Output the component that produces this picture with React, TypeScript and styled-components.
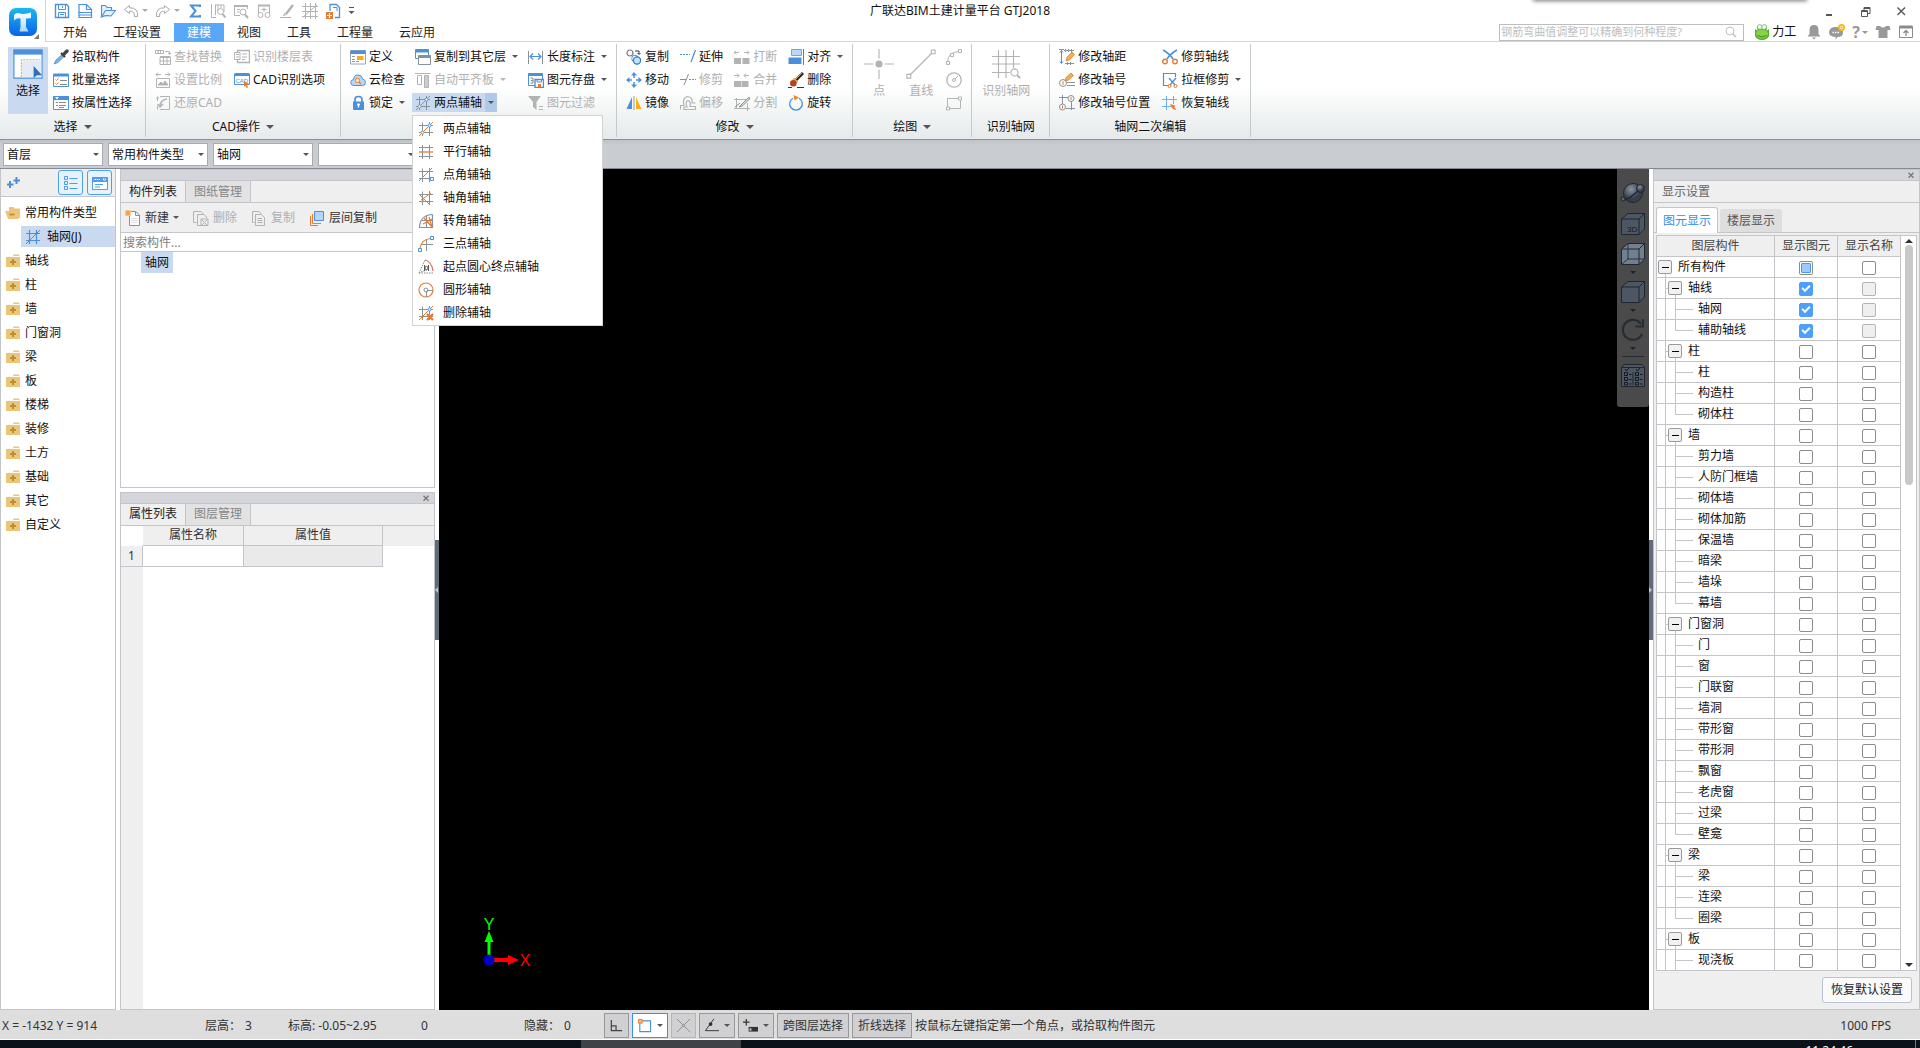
import React, { useState } from "react";
import styled, { createGlobalStyle, css } from "styled-components";

/* ---------- palette ---------- */
const c = {
  blue: "#4a90dd",
  pale: "#c9d9ef",
  line: "#c3c5cb",
  grey: "#b3b3b3",
  slate: "#87929c",
  orange: "#ec7a2c",
  text: "#111",
  panel: "#efefef",
  strip: "#d3d5da",
};

const Global = createGlobalStyle`
  *, *::before, *::after { box-sizing: border-box; }
  body { margin: 0; background: #fff; overflow: hidden; }
  body, button, input, select {
    font-family: "Noto Sans", "Noto Sans CJK SC", sans-serif;
    font-size: 12px;
    line-height: 16px;
    color: ${c.text};
  }
  button { border: 0; padding: 0; margin: 0; background: none; white-space: nowrap; }
  ul { list-style: none; margin: 0; padding: 0; }
`;

/* ---------- icons ---------- */
const g = c.grey;
const hash = (col: string) => (
  <path d="M4.500 1.500V15M11.500 1V15M1 4.500H15M1 11.500H15" stroke={col} fill="none" />
);

const icons: Record<string, React.ReactNode> = {
  save: <g stroke={c.blue} fill="none"><path d="M1.500 1.500H12.500L14.500 3.500V14.500H1.500Z" strokeWidth="1.400" /><path d="M4.500 2V6.500H11.500V2M8.500 3V5M4.500 14V9.500H11.500V14M6 11.500H10" /></g>,
  doc: <g stroke={c.blue} fill="none"><path d="M2 1.500H9.500L14.500 6.500V14.500H2Z" strokeWidth="1.200" /><path d="M9.500 1.500V6.500H14.500M1.500 9.500H14.500M1.500 12H14.500" strokeWidth="1.200" /></g>,
  open: <path d="M1.500 14V2.500H5.500L7 4.500H11.500V7M1.500 14L5.500 7.500H15.500L11 13Q6 12 1.500 14Z" stroke={c.blue} fill="#e4f0fc" strokeWidth="1.100" />,
  undo: <path d="M6.500 2.500L1.500 6.500L6.500 10.500V8.200Q11.500 7.500 11.500 13.500H14.500Q15.500 4.500 6.500 4.800Z" stroke="#a9a9a9" fill="#fff" />,
  redo: <path d="M9.500 2.500L14.500 6.500L9.500 10.500V8.200Q4.500 7.500 4.500 13.500H1.500Q.5 4.500 9.500 4.800Z" stroke="#a9a9a9" fill="#fff" />,
  sum: <path d="M13 4V2.500H4L8.500 8L4 13.500H13V12" stroke={c.blue} strokeWidth="2" fill="none" />,
  qa1: <g stroke={g} fill="none"><path d="M1.500 1V14.500H6M5 2H14V9M5.500 2V12M8 2V8M11 2V5" /><circle cx="10.500" cy="8.500" r="3" /><path d="M12.500 11L15.500 14.500" strokeWidth="2" /></g>,
  qa2: <g stroke={g} fill="none"><path d="M7 12.500H1.500V2.500H14.500V6" /><path d="M1 3H15" strokeWidth="2" /><path d="M4 6.500H7M4 9H6" /><circle cx="10" cy="9" r="3" /><path d="M12 11.500L15 15" strokeWidth="2" /></g>,
  qa3: <g stroke={g} fill="none"><path d="M2.500 10V2.500H13.500V10" /><path d="M2 2.500H14" strokeWidth="2" /><path d="M8 4.500V9M5.500 6.500H10.500" /><circle cx="4.500" cy="12" r="2.500" /><circle cx="11.500" cy="12" r="2.500" /></g>,
  qa4: <g stroke={g} fill="none"><path d="M14 2L7 11" strokeWidth="2.500" /><path d="M6 10L4.500 12.500L7.500 11.500M1 14.500H12" /></g>,
  qa5: <path d="M3.500 0V16M8.500 0V16M13.500 0V16M0 3.500H16M0 8.500H16M0 13.500H16M1 14L15 2" stroke={g} fill="none" />,
  qa6: <g fill="none"><path d="M5 8V1.500H11.500L14.500 4.500V14.500H10" stroke={c.blue} strokeWidth="1.300" /><path d="M8 4.500H12M12 4.500V8" stroke={c.blue} /><path d="M1 9H8V16H1Z" fill={c.orange} /><path d="M4.500 10V15M2 12.500H7" stroke="#fff" strokeWidth="1.200" /></g>,
  select: <g><path d="M.5 .5H15.500V15.500H.5Z" fill="#fff" stroke={c.blue} strokeWidth=".6" /><path d="M.3 .3H15.700V3H.3Z" fill={c.blue} /><path d="M4.500 15V5.700H14.500" fill="none" stroke="#fbb214" strokeWidth=".6" strokeDasharray="1.200 .5" /><path d="M4.900 6.100H15V15H4.900Z" fill="#e4ebf6" /><path d="M11 9L15.500 14H12.700L11 15.400Z" fill="#2e6fb5" /></g>,
  pick: <g><path d="M1 15L3 11L8.500 6L10.500 8L5 13.500Z" fill="#79b5ea" stroke="#4f83b5" strokeWidth=".7" /><path d="M8 4L12 8" stroke="#333" strokeWidth="2" /><path d="M10.500 5.500L14 2" stroke="#444" strokeWidth="3.400" strokeLinecap="round" /></g>,
  batch: <g fill="none"><path d="M.5 2.500H15.500V14.500H.5Z" stroke={c.blue} fill="#fff" /><path d="M.5 3H15.500" stroke={c.blue} strokeWidth="3" /><path d="M2.500 7.500L3.500 8.500L5.500 6.500M2.500 11.500L3.500 12.500L5.500 10.500" stroke={c.orange} /><path d="M7 8.500H14M7 12.500H14" stroke="#888" /></g>,
  prop: <g fill="none"><path d="M.5 1.500H15.500V14.500H.5Z" stroke={c.blue} fill="#fff" /><path d="M.5 3H15.500" stroke={c.blue} strokeWidth="4" /><path d="M2 2H6L4 4.500Z" fill="#fff" /><path d="M3 7.500H5M3 10.500H5M6 7.500H13M6 10.500H13M6 12.500H11" stroke="#8a8a8a" /></g>,
  find: <g stroke={g} fill="none"><path d="M.5 1.500H8.500V4.500H.5ZM3 1.500V4.500M5.500 1.500V4.500M10 2.500H14.500V5M13 4L14.500 5.500L16 4M5 8.500H15.500V15.500H5ZM5 7.500H15.500M8.500 8V15.500M12 8V15.500M5 12H15.500" /></g>,
  scale: <g stroke={g} fill="none"><path d="M1 2.500H6M3 .5L1 2.500L3 4.500M10 2.500H15M13 .5L15 2.500L13 4.500M1.500 6.500H14.500V15.500H1.500Z" /><path d="M3 13L6 10L8 12L10 9L13 13Z" fill={g} /></g>,
  restore: <g stroke={g} fill="none"><path d="M5 1.500H14.500V14.500H5M2.500 11V14.500M2.500 1.500V6M1 3H4" /><path d="M12 4Q5 5 5 12M2.500 9L5 12L8 9" strokeWidth="1.500" /></g>,
  floor: <g stroke={g} fill="none"><path d="M3.500 1.500H15.500V13.500H3.500Z" strokeWidth="1.400" /><path d="M8 5H13M8 8H13M8 10.500H11" /><path d="M.5 3.500H6V10.500H.5Z" fill="#fff" /><path d="M2 5.500H5M2 8H5" /></g>,
  cad: <g><path d="M.5 2.500H15.500V12.500H.5Z" fill="#fff" stroke={c.blue} /><path d="M.5 2.500H15.500" stroke={c.blue} strokeWidth="3" /><text x="1.500" y="10.500" fontSize="6" fontFamily="Liberation Sans, sans-serif" fill={c.blue}>CAD</text><path d="M10 9L15 12L13 13L14 15.500L12.500 16L11.500 13.500L10 15Z" fill={c.orange} /></g>,
  define: <g><path d="M.5 1.500H15.500V15H.5Z" fill="#fff" stroke="#9aa5b1" /><path d="M.5 1.500H15.500V5H.5Z" fill={c.blue} /><path d="M2 7.500H5M2 10.500H5M2 12.500H5M6 12.500H9" stroke="#999" /><path d="M7 7H13.500V11H7Z" fill="#fca81c" /></g>,
  cloud: <g><path d="M4 13.500Q.7 13.500 .7 10.500Q.7 8 3.500 7.500Q4 3 8 3Q12 3 12.500 7Q15.500 7.500 15.500 10.500Q15.500 13.500 12.500 13.500Z" fill="#b9d8f5" stroke={c.blue} /><circle cx="7.500" cy="8.500" r="2.200" fill="#fde8d6" stroke={c.orange} /><path d="M9.200 10.200L11 12" stroke={c.orange} strokeWidth="1.300" /></g>,
  lock: <g><path d="M5 7V4.500Q5 1.500 8.500 1.500Q12 1.500 12 4.500V7" fill="none" stroke={c.blue} strokeWidth="1.700" /><path d="M3 6.500H14V14Q14 15 13 15H4Q3 15 3 14Z" fill={c.blue} /><path d="M8.500 8.500V12.500M7 9.500H10" stroke="#fff" strokeWidth="1.400" /></g>,
  copyFloor: <g><path d="M.5 .5H13.500V9.500H.5Z" fill="#fff" stroke={c.blue} /><path d="M.5 2H13.500" stroke={c.blue} strokeWidth="3" /><path d="M3.500 6.500H15.500V15.500H3.500Z" fill="#fff" stroke={c.slate} /><path d="M3.500 7.500H15.500" stroke={c.slate} strokeWidth="3" /></g>,
  slab: <g stroke={g} fill="none"><path d="M0 1.500H15.500M2.500 3.500H6.500V12.500H2.500Z" /><path d="M9.500 3.500H13.500V15.500H9.500Z" fill="#ccc" /></g>,
  length: <g fill="none"><path d="M.5 2V15M14.500 2V15" stroke={c.slate} /><path d="M2 7.500H13M5 4.500L2 7.500L5 10.500M10 4.500L13 7.500L10 10.500" stroke={c.blue} strokeWidth="1.200" /></g>,
  store: <g fill="none"><path d="M.5 1.500H14.500V13.500H.5Z" fill="#fff" stroke={c.blue} /><path d="M.5 2.500H14.500" stroke={c.blue} strokeWidth="3" /><path d="M2.500 6H5V11H2.500M3 8.500H5" stroke="#888" /><path d="M7 7.500H15.500V15.500H7Z" fill="#fff" stroke={c.blue} strokeWidth="1.400" /><path d="M9 7.500H13.500V10H9Z" stroke={c.blue} /><path d="M10 12H13V15H10Z" fill={c.orange} /></g>,
  filter: <g><path d="M0 1H13L8.500 7V15L5 12V7Z" fill={g} /><path d="M11 11.500H15M11 14.500H15" stroke={g} /></g>,
  copy: <g fill="none"><circle cx="4" cy="4" r="3" fill="#fff" stroke="#777" strokeWidth="1.200" /><circle cx="9" cy="9.500" r="3.300" stroke={c.blue} fill="#fff" /><circle cx="11" cy="11.500" r="3.600" stroke="#2c79c9" fill="#bfe3f9" strokeWidth="1.200" /><path d="M9 2H13V5M11.500 4L13 5.500L14.500 4" stroke="#333" /></g>,
  move: <g fill={c.blue}><path d="M8 0L11 3.500H5ZM8 16L11 12.500H5ZM0 8L3.500 5V11ZM16 8L12.500 5V11Z" /><path d="M8 3V6M8 10V13M3 8H6M10 8H13" stroke={c.blue} strokeWidth="1.500" /></g>,
  mirror: <g><path d="M6 2V14H.5Z" fill={c.blue} /><path d="M10 2V14H15.500Z" fill="#fcae17" /><path d="M8 1V15" stroke="#999" /></g>,
  extend: <g fill="none" stroke={c.blue}><path d="M0 5.500H10" strokeDasharray="2 1" /><path d="M15.500 1L11 13" strokeWidth="1.300" /></g>,
  trim: <g fill="none" stroke="#8f8f8f"><path d="M0 7.500H6M8.500 2L4 13" /><path d="M9 7.500H16" strokeDasharray="2 1" /></g>,
  offset: <g stroke={g} fill="none" strokeWidth="1.200"><path d="M.5 14.500V10.500H4Q2 3 7.500 1.500Q13 2 12 8H15.500" /><path d="M4 14.500V12H7Q5 6 8 5.500Q11 6 10 11.500H15.500V14.500Z" /></g>,
  brk: <g fill={g}><path d="M0 9H7V15H0ZM8.500 9H15.500V15H8.500Z" /><path d="M0 3.500H5M2 1.500L0 3.500L2 5.500M10 3.500H15M13 1.500L15 3.500L13 5.500" stroke={g} fill="none" /></g>,
  merge: <g fill={g}><path d="M0 9H7V15H0ZM7.500 9H14.500V15H7.500Z" /><path d="M0 3.500H5M3 1.500L5 3.500L3 5.500M10 3.500H15M12 1.500L10 3.500L12 5.500" stroke={g} fill="none" /></g>,
  split: <g stroke="#8f8f8f" fill="none"><path d="M2.500 3V14M0 4.500H16M0 13.500H16M13.500 8V16" stroke={g} /><path d="M15 2L8 9L5 12L9 10.500L15.500 4Z" fill="#ddd" /><path d="M1 12L6 8" /></g>,
  align: <g><path d="M3.500 .5H13.500V6.500H3.500Z" fill="#b9d8fb" stroke="#6aa8ec" /><path d="M.5 8.500H13.500V15H.5Z" fill={c.blue} /><path d="M15.500 0V16" stroke="#777" /></g>,
  erase: <g><path d="M15 1L8 8" stroke="#222" strokeWidth="3" /><path d="M14 .8L8 7" stroke="#d9c08a" strokeWidth="1" /><path d="M5 7L9 11" stroke="#e7b55a" strokeWidth="3.200" /><circle cx="5.300" cy="11.300" r="3.300" fill="#b5441d" /><path d="M0 15.500H4M9 15.500H16" stroke="#333" /></g>,
  rotate: <g><path d="M11 3.200A6.300 6.300 0 1 1 5 3.200" fill="none" stroke={c.blue} strokeWidth="1.300" /><path d="M5.500 0L11 2.500L6.500 5.500Z" fill="#f08519" /></g>,
  arc: <g stroke={g} fill="none"><path d="M1.500 13Q2 3 13 2.500" /><path d="M.5 12.500H3.500V15.500H.5ZM4.500 4.500H7.500V7.500H4.500ZM12.500 .5H15.500V3.500H12.500Z" fill="#fff" /></g>,
  circle: <g stroke={g} fill="none"><circle cx="8" cy="8" r="7.200" strokeWidth="1.300" /><circle cx="8" cy="8" r="1.500" /><path d="M9 7L12 4" /></g>,
  rect: <g stroke={g} fill="none"><path d="M1.500 3.500H14.500V13.500H1.500Z" /><path d="M.5 12H3.500V15H.5ZM12.500 2H15.500V5H12.500Z" fill="#fff" /></g>,
  point: <g stroke={g}><path d="M8 0V5M8 11V16M0 8H5M11 8H16" strokeWidth=".6" /><circle cx="8" cy="8" r="1.900" fill={g} stroke="none" /></g>,
  lineBig: <g stroke={g} fill="none" strokeWidth=".6"><path d="M2 14L14 2" /><path d="M.5 13.500H2.500V15.500H.5ZM13.500 .5H15.500V2.500H13.500Z" fill="#fff" /></g>,
  gridBig: <g stroke={g} fill="none" strokeWidth=".6"><path d="M4 .5V15.500M8 .5V15.500M12 .5V10M.5 4H15.500M.5 8H15.500M.5 12.500H10" /><circle cx="12.500" cy="12.500" r="1.900" fill="#fff" /><path d="M14 14L15.500 15.500" strokeWidth="1" /></g>,
  axDist: <g fill="none"><path d="M2.500 2V14M1 3.500L2.500 1.500L4 3.500M1 12.500L2.500 14.500L4 12.500" stroke={c.blue} /><path d="M0 .5H5M6.500 0V3M9.500 0V3M12.500 0V3M5 1.500H15M6 14.500H15M8.500 13V16M11.500 13V16" stroke={c.slate} /><path d="M7 12L8 8.500L13 3L15.500 5.500L10.500 11Z" fill="#f7ad4c" stroke="#c97a22" strokeWidth=".7" /></g>,
  axNo: <g fill="none"><circle cx="4" cy="11" r="3.500" stroke={c.slate} /><path d="M4 9V13" stroke={c.orange} /><path d="M8 10.500H16M8 13.500H16" stroke={c.slate} /><path d="M6 9L7 5.500L12 1L14.500 3.500L9.500 8Z" fill="#f7ad4c" stroke="#c97a22" strokeWidth=".7" /></g>,
  axPos: <g fill="none" stroke={c.slate}><path d="M0 2.500H9M3.500 0V9M12.500 6V15M7 13.500H16" /><circle cx="12" cy="3.500" r="3" /><circle cx="3.500" cy="12" r="3" /><path d="M12 2V5M3.500 10.500V13.500" stroke={c.orange} /></g>,
  cutAx: <g fill="none"><path d="M1 1Q7 4 11 10M15 1Q9 4 5 10" stroke={c.blue} strokeWidth="1.600" /><circle cx="3" cy="12.500" r="2.300" stroke={c.orange} strokeWidth="1.400" /><circle cx="13" cy="12.500" r="2.300" stroke={c.orange} strokeWidth="1.400" /></g>,
  cutBox: <g fill="none"><path d="M7 13.500H1.500V1.500H13.500V5" stroke={c.blue} strokeWidth="1.200" /><path d="M7 6L13 13M14 6L8 13" stroke={c.blue} strokeWidth="1.300" /><circle cx="7.500" cy="14" r="1.500" stroke={c.orange} /><circle cx="13.500" cy="14" r="1.500" stroke={c.orange} /></g>,
  resAx: <g fill="none"><path d="M4.500 1V15M11.500 1V9M0 4.500H15M0 11.500H9" stroke="#72aeea" /><path d="M8 9L13 10.500L12.500 12.500L14.500 15L12 14.500L10 13Z" fill={c.orange} /></g>,
  aux1: <g fill="none">{hash(c.slate)}<path d="M1 15L15 1" stroke={c.orange} /><circle cx="11.500" cy="4.500" r="1.500" stroke={c.blue} fill="#fff" /><circle cx="4.500" cy="11.500" r="1.500" stroke={c.slate} fill="#fff" /></g>,
  aux2: <g fill="none"><path d="M4.500 1V15M11.500 1V15M1 3.500H15M1 12.500H15" stroke={c.slate} /><path d="M1 8H15" stroke={c.orange} strokeWidth="1.300" /></g>,
  aux3: <g fill="none">{hash(c.slate)}<path d="M1 14L14 1" stroke={c.orange} /><path d="M12.500 10.500H15.500V13.500H12.500Z" stroke={c.blue} fill="#fff" /></g>,
  aux4: <g fill="none">{hash(c.slate)}<path d="M1 4L11 14M13 3L3 10M3 6Q6 8 5 12" stroke={c.orange} /></g>,
  aux5: <g fill="none"><path d="M14.500 1.500V14.500H1.500Q2 2 14.500 1.500M8.500 3V14M4 7.500H14" stroke={c.slate} strokeWidth="1.200" /><path d="M6 5L14 14L11 4M5 11L14 6" stroke={c.orange} strokeWidth="1.200" /></g>,
  aux6: <g fill="none"><path d="M8.500 3V15M3 8.500H15" stroke={c.slate} /><path d="M2 13Q3 3 13 2.500" stroke={c.orange} strokeWidth="1.200" /><path d="M.5 12.500H3.500V15.500H.5ZM12.500 .5H15.500V3.500H12.500Z" stroke={c.blue} fill="#fff" /></g>,
  aux7: <g fill="none"><path d="M1 14L7 1M1 14H15M3 13L9 11" stroke="#888" strokeDasharray="1.500 1" /><path d="M7 1Q14 3 15 12" stroke="#d9766c" strokeWidth="1.300" /><path d="M6.500 6V12M10.500 6V12" stroke="#555" /><circle cx="8.500" cy="9" r="1.600" stroke="#555" /></g>,
  aux8: <g fill="none"><circle cx="8" cy="8" r="7" stroke={c.orange} strokeWidth="1.200" /><circle cx="8" cy="8" r="2" stroke={c.slate} /><path d="M9 8.500H15M8.500 9V15" stroke={c.slate} /></g>,
  aux9: <g fill="none">{hash(c.slate)}<path d="M1 15L15 1" stroke={c.orange} /><circle cx="11.500" cy="4.500" r="1.500" stroke={c.blue} fill="#fff" /><path d="M9 9L15 15M15 9L9 15" stroke={c.orange} strokeWidth="2.400" /></g>,
  axis: <g fill="none"><path d="M4.500 1V15M11.500 1V15M1 4.500H15M1 11.500H15" stroke={c.blue} strokeWidth="1.200" /><path d="M1 15L15 1" stroke="#8b7d78" /></g>,
  folder: <g fill="#ecc578"><path d="M1 4H15V14H1ZM7.500 3L9 1.500H13.500L15 3Z" /><path d="M8 6V12M5 9H11" stroke="#bd9033" strokeWidth="2" /></g>,
  folderOpen: <g fill="#ecc578"><path d="M4 2H8.500L9.500 3.500H15V13H13L11.500 6.500H4Z" /><path d="M0 6H11.500L13.500 14H3Z" /><path d="M4.500 9.500H9.500" stroke="#b98a2e" strokeWidth="1.600" /></g>,
  plus2: <path d="M4 6V13M1 9.500H7.500M10.500 2V9M7.500 5.500H14" stroke={c.blue} strokeWidth="2" />,
  list: <g fill="none" stroke="#4a9df0"><path d="M1.500 1.500H4.500V4.500H1.500ZM1.500 6.500H4.500V9.500H1.500ZM1.500 11.500H4.500V14.500H1.500Z" /><path d="M6.500 3.500H14.500M6.500 8.500H14.500M6.500 13.500H14.500" /></g>,
  card: <g fill="none"><path d="M.5 2.500H15.500V14.500H.5Z" stroke="#4a9df0" fill="#fff" /><path d="M.5 2H15.500V7H.5Z" fill="#4a9df0" /><path d="M2.500 4.500H8M11 4H14L12.500 6Z" stroke="#fff" strokeDasharray="1.500 .8" /><path d="M3 9.500H11M3 12H8" stroke="#4a9df0" /></g>,
  create: <g fill="none"><path d="M4.500 6V15.500H14.500V5L10.500 1.500H6" stroke={c.slate} fill="#fff" /><path d="M10.500 1.500V5.500H14.500" stroke={c.slate} /><path d="M6 8.500H12.500M6 10.500H12.500M6 12.500H12.500" stroke="#ddd" /><path d="M.5 .5L5.500 5.500M5.500 .5L.5 5.500M3 0V6M0 3H6" stroke="#f3a13a" strokeWidth="1.200" /></g>,
  del: <g fill="none" stroke={g}><path d="M3.500 12.500H.5V1.500H8L10.500 4" /><path d="M8 15.500H4.500V4.500H11L13.500 7V8" /><path d="M8 9H15V15.500H8ZM9 10L14 15M14 10L9 15" /></g>,
  dup: <g fill="none" stroke={g}><path d="M3.500 12.500H1.500V1.500H8L10.500 4" /><path d="M4.500 4.500H10.500L13.500 7.500V15.500H4.500ZM6.500 8.500H11M6.500 10.500H11.500M6.500 12.500H11.500" /></g>,
  layers: <g><path d="M5.500 1.500H14.500V10.500H5.500Z" fill="#b5d6fa" stroke={c.blue} /><path d="M3.500 4V13.500H12M1.500 6V15.500H9" fill="none" stroke={c.orange} /></g>,
  user: <g><path d="M1 5L3.500 7L3 2L5 5H11L13 2L12.500 7L15 5L15 12Q13 16 8 16Q3 16 1 12Z" fill="#4fae2b" /><ellipse cx="8" cy="10" rx="6" ry="4.500" fill="#86d443" /><circle cx="5.800" cy="3" r="2.400" fill="#f1faea" stroke="#5f9f4a" strokeWidth=".6" /><circle cx="10.200" cy="3" r="2.400" fill="#f1faea" stroke="#5f9f4a" strokeWidth=".6" /><path d="M3.500 11.500Q8 14.500 12.500 11.500" stroke="#3b8f1e" fill="none" /></g>,
  bell: <path d="M8 1Q12.500 1 12.500 6V10L14.500 12.500H1.500L3.500 10V6Q3.500 1 8 1ZM6 13.500H10L8 15.500Z" fill="#999" />,
  chat: <g><path d="M7 3Q14 3 14 8.500Q14 13 8.500 13L6.500 15.500V13Q0 12.500 0 8.500Q0 3 7 3Z" fill="#999" /><path d="M3.500 8.500H10.500" stroke="#fff" strokeWidth="1.500" strokeDasharray="1.500 1" /><circle cx="12.500" cy="3.500" r="3.500" fill="#fbb40f" /><circle cx="12.500" cy="3.500" r="1.300" fill="none" stroke="#fff" strokeWidth=".8" /></g>,
  shirt: <path d="M1.500 2H5Q8 5 11 2H14.500L15.500 6H12.500V14H3.500V6H.5Z" fill="#999" />,
  up: <g fill="none" stroke="#8a8a8a"><path d="M1.500 2.500H14.500V13.500H1.500Z" /><path d="M1.500 3H14.500" strokeWidth="3" /><path d="M8 12V7M5.500 9L8 6.500L10.500 9" strokeWidth="1.300" /></g>,
  min: <path d="M5 12H11" stroke="#555" strokeWidth="2" />,
  max: <path d="M4.500 7.500H10.500V13.500H4.500ZM4.500 8.500H10.500M7 7V4.500H13V10.500H11M7 5.500H13" stroke="#555" fill="none" />,
  close: <path d="M4.500 4.500L12 12M12 4.500L4.500 12" stroke="#555" strokeWidth="1.400" />,
  closeSmall: <path d="M4 4.500L12 12.500M12 4.500L4 12.500" stroke="#777" strokeWidth="2" />,
  search: <g stroke="#c2c2c2" fill="none"><circle cx="7" cy="7" r="4" /><path d="M10 10L13 13" strokeWidth="1.600" /></g>,
  corner: <path d="M2.500 2V13.500H14M2.500 8.500H7.500V13.500" stroke="#444" fill="none" strokeWidth="1.300" />,
  boxSel: <g fill="none"><path d="M3 3H14.500V14.500H3Z" stroke={c.blue} strokeWidth="1.200" /><path d="M1.500 1.500H5.500V5.500H1.500Z" fill="#fbb78a" stroke={c.orange} /></g>,
  cross: <g stroke="#8b8b8b" fill="none"><path d="M1 1L15 15M15 1L1 15" /><circle cx="8" cy="8" r="1.300" fill="#ccc" /></g>,
  angle: <g><path d="M10.500 1L1.500 13.500H16" stroke="#333" fill="none" /><circle cx="7" cy="6.500" r="2" fill="#333" /></g>,
  plusBox: <g><path d="M3.500 1V8M0 4.500H7" stroke="#333" strokeWidth="1.300" /><path d="M6 9.500H16V14.500H6Z" fill="#333" /><path d="M7 11H9V13.500H7Z" fill="#ccc" /></g>,
};

const Svg = styled.svg<{ $s?: number }>`
  display: block;
  flex: none;
  width: ${(p) => p.$s ?? 16}px;
  height: ${(p) => p.$s ?? 16}px;
`;
const Icon = ({ n, s }: { n: string; s?: number }) => (
  <Svg $s={s} viewBox="0 0 16 16" aria-hidden="true">{icons[n]}</Svg>
);

const Tri = styled.i<{ $c?: string; $big?: boolean }>`
  flex: none;
  width: 0;
  height: 0;
  border: ${(p) => (p.$big ? 4 : 3)}px solid transparent;
  border-bottom: 0;
  border-top-color: ${(p) => p.$c ?? "#555"};
`;

/* ---------- shell ---------- */
const Shell = styled.div`
  display: flex;
  flex-direction: column;
  height: 100vh;
  background: #fff;
`;

const Header = styled.header`
  position: relative;
  display: grid;
  grid-template-columns: 46px 1fr;
  grid-template-rows: 23px 19px;
`;
/* lower edge of the drawer docked above the window */
const TopDrawer = styled.div`
  position: absolute;
  top: -10px;
  right: 114px;
  width: 272px;
  height: 10px;
  box-shadow: 0 0 4px 1px #777;
`;
const LogoButton = styled.button`
  grid-area: 1 / 1 / 3 / 2;
  z-index: 1;
  display: flex;
  align-items: center;
  justify-content: center;
  padding-top: 4px;
  border-right: 1px solid #d4d4d4;
`;
const TitleRow = styled.div`
  grid-area: 1 / 1 / 2 / 3;
  display: grid;
  grid-template-columns: 1fr auto 1fr;
  align-items: center;
  padding-bottom: 2px;
`;
const Title = styled.h1`
  margin: 0;
  font-size: 12px;
  font-weight: 400;
  line-height: 20px;
`;
const Quick = styled.div`
  display: flex;
  align-items: center;
  gap: 7px;
  padding-left: 54px;
  button { display: flex; align-items: center; gap: 3px; }
`;
const WindowButtons = styled.div`
  display: flex;
  justify-content: flex-end;
  align-items: center;
  gap: 20px;
  padding-right: 11px;
`;
const TabRow = styled.div`
  grid-area: 2 / 2 / 3 / 3;
  display: flex;
  justify-content: space-between;
  border-bottom: 1px solid #d4d4d4;
`;
const Tabs = styled.nav`
  display: flex;
  padding-left: 4px;
`;
const RibbonTab = styled.button<{ $on?: boolean }>`
  height: 19px;
  padding: 0 13px;
  color: ${(p) => (p.$on ? "#fff" : "#222")};
  background: ${(p) => (p.$on ? "#59a7f8" : "transparent")};
`;
const Tools = styled.div`
  display: flex;
  align-items: center;
  gap: 7px;
  padding-right: 6px;
  button { display: flex; align-items: center; gap: 2px; height: 16px; }
`;
const UserButton = styled.button`
  margin: 0 3px;
`;
const SearchBox = styled.label`
  display: flex;
  align-items: center;
  width: 245px;
  height: 17px;
  padding: 0 4px 0 1px;
  border: 1px solid #bdbdbd;
  input {
    flex: 1;
    min-width: 0;
    height: 15px;
    padding: 0;
    border: 0;
    outline: 0;
    font-size: 11px;
    background: none;
  }
  input::placeholder { color: #c0c0c0; }
`;
const Help = styled.span`
  font-size: 16px;
  font-weight: 700;
  color: #999;
`;

/* ---------- ribbon ---------- */
const Ribbon = styled.div`
  display: flex;
  height: 98px;
  flex: none;
  border-bottom: 1px solid #8b9098;
  background: linear-gradient(#fff 45%, #e6eaea);
`;
const Group = styled.section`
  display: flex;
  flex-direction: column;
  margin: 2px 0;
  padding-top: 3px;
  border-right: 1px solid #c6cacb;
`;
const GroupBody = styled.div<{ $l?: number; $r?: number; $gap?: number }>`
  display: flex;
  gap: ${(p) => p.$gap ?? 2}px;
  height: 67px;
  padding: 0 ${(p) => p.$r ?? 6}px 0 ${(p) => p.$l ?? 6}px;
`;
const GroupLabel = styled.div`
  display: flex;
  flex: 1;
  align-items: center;
  justify-content: center;
  gap: 6px;
  padding-top: 3px;
`;
const Col = styled.div`
  display: flex;
  flex-direction: column;
  align-items: flex-start;
  gap: 4px;
`;
const Small = styled.button<{ $on?: boolean }>`
  display: flex;
  align-items: center;
  gap: 3px;
  height: 19px;
  padding-left: 3px;
  background: ${(p) => (p.$on ? c.pale : "transparent")};
  &:disabled { color: #b0b0b0; }
`;
const Arrow = styled.span<{ $on?: boolean }>`
  display: flex;
  align-items: center;
  justify-content: center;
  width: 12px;
  height: 19px;
  background: ${(p) => (p.$on ? "#b0c9ea" : "transparent")};
`;
const Big = styled.button<{ $on?: boolean }>`
  display: flex;
  flex-direction: column;
  align-items: center;
  gap: 4px;
  min-width: 40px;
  height: 67px;
  padding: 2px 3px 0;
  background: ${(p) => (p.$on ? c.pale : "transparent")};
  &:disabled { color: #b0b0b0; }
`;
const MenuAnchor = styled.div`
  position: relative;
`;
const Menu = styled.ul`
  position: absolute;
  top: 22px;
  left: 0;
  z-index: 5;
  width: 191px;
  padding: 1px 0;
  background: #fff;
  border: 1px solid #d3d3d3;
`;
const MenuItem = styled.button`
  display: flex;
  align-items: center;
  gap: 9px;
  width: 100%;
  height: 23px;
  padding-left: 5px;
`;

type Tool = [icon: string, label: string, flags?: string];
const ToolButton = ({ t }: { t: Tool }) => {
  const [icon, label, flags = ""] = t;
  const off = flags.includes("x");
  return (
    <Small disabled={off} aria-label={label || icon}>
      <Icon n={icon} />
      {label}
      {flags.includes("v") && <Arrow><Tri $c={off ? "#b8b8b8" : "#555"} /></Arrow>}
    </Small>
  );
};
const ToolCol = ({ items }: { items: Tool[] }) => (
  <Col>{items.map((t) => <ToolButton key={t[0]} t={t} />)}</Col>
);

const auxItems: [string, string][] = [
  ["aux1", "两点辅轴"], ["aux2", "平行辅轴"], ["aux3", "点角辅轴"], ["aux4", "轴角辅轴"], ["aux5", "转角辅轴"],
  ["aux6", "三点辅轴"], ["aux7", "起点圆心终点辅轴"], ["aux8", "圆形辅轴"], ["aux9", "删除辅轴"],
];

/* ---------- selector band ---------- */
const Band = styled.div`
  display: flex;
  flex: none;
  gap: 5px;
  height: 29px;
  padding: 3px 3px 2px;
  background: linear-gradient(#bfc2c7, #c9ccd1 5px);
  border-bottom: 1px solid #868b93;
`;
const Combo = styled.span`
  display: grid;
  align-items: center;
  width: 100px;
  height: 23px;
  background: #fff;
  border: 1px solid #a9abae;
  select, i { grid-area: 1 / 1; }
  select {
    appearance: none;
    width: 100%;
    height: 21px;
    padding: 0 14px 0 3px;
    border: 0;
    border-radius: 0;
    background: none;
    outline: 0;
  }
  i { justify-self: end; margin-right: 3px; pointer-events: none; }
`;

/* ---------- work area ---------- */
const Work = styled.main`
  display: flex;
  flex: 1;
  min-height: 0;
`;
const Nav = styled.aside`
  width: 116px;
  flex: none;
  margin-right: 4px;
  border: 1px solid ${c.line};
  border-top: 0;
`;
const NavTools = styled.div`
  display: flex;
  align-items: center;
  gap: 4px;
  height: 28px;
  padding: 0 3px 0 5px;
  background: ${c.panel};
  border-bottom: 1px solid ${c.line};
`;
const ViewButton = styled.button`
  display: grid;
  place-items: center;
  width: 25px;
  height: 25px;
  border: 1px solid #4ba0f2;
  border-radius: 3px;
  background: #e6f2fe;
`;
const Spacer = styled.span`
  flex: 1;
`;
const NavList = styled.ul`
  padding-top: 4px;
  li { padding: 1px 0 2px; }
`;
const NavItem = styled.button<{ $child?: boolean }>`
  display: flex;
  align-items: center;
  gap: ${(p) => (p.$child ? 6 : 4)}px;
  height: 21px;
  ${(p) =>
    p.$child
      ? css`width: calc(100% - 20px); margin-left: 20px; padding-left: 4px; background: ${c.pale};`
      : css`width: 100%; padding-left: 4px;`}
`;

const DockColumn = styled.div`
  display: flex;
  flex-direction: column;
  gap: 4px;
  width: 315px;
  flex: none;
`;
const Dock = styled.section<{ $grow: number }>`
  display: flex;
  flex-direction: column;
  flex: ${(p) => p.$grow} 1 0;
  min-height: 0;
  border: 1px solid ${c.line};
`;
const Strip = styled.div`
  display: flex;
  flex: none;
  align-items: center;
  justify-content: flex-end;
  height: 11px;
  padding-right: 3px;
  background: ${c.strip};
  border-bottom: 1px solid ${c.line};
  button { display: flex; }
`;
const DockTabs = styled.div`
  display: flex;
  flex: none;
  height: 22px;
  background: ${c.panel};
  border-bottom: 1px solid ${c.line};
`;
const DockTab = styled.button<{ $on?: boolean }>`
  padding: 0 8px;
  height: 21px;
  border-right: 1px solid ${c.line};
  color: ${(p) => (p.$on ? "#222" : "#868686")};
  background: ${(p) => (p.$on ? c.panel : "#e2e2e2")};
`;
const DockTools = styled.div`
  display: flex;
  flex: none;
  align-items: center;
  gap: 14px;
  height: 30px;
  padding-left: 4px;
  background: ${c.panel};
  border-bottom: 1px solid ${c.line};
  button { display: flex; align-items: center; gap: 4px; color: #333; }
  button:disabled { color: #aeaeae; }
`;
const DockSearch = styled.input`
  flex: none;
  height: 19px;
  padding: 0 2px;
  border: 0;
  border-bottom: 1px solid ${c.line};
  outline: 0;
  &::placeholder { color: #808080; }
`;
const Entry = styled.button`
  align-self: flex-start;
  height: 21px;
  margin-left: 20px;
  padding: 0 4px;
  background: ${c.pale};
`;
const PropArea = styled.div`
  display: flex;
  flex: 1;
  flex-direction: column;
  background: linear-gradient(${c.panel}, ${c.panel}) 0 0 / 22px 100% no-repeat;
`;
const PropTable = styled.table`
  width: 100%;
  table-layout: fixed;
  border-spacing: 0;
  color: #333;
  th, td { height: 20px; padding: 0; font-weight: 400; text-align: center; }
  thead th { background: ${c.panel}; border-right: 1px solid ${c.line}; border-bottom: 1px solid ${c.line}; }
  thead th:first-child { background: #fff; border: 0; }
  thead th:last-child { border: 0; }
  tbody th { border-right: 1px solid ${c.line}; border-bottom: 1px solid ${c.line}; background: ${c.panel}; }
  tbody td { height: 21px; border-right: 1px solid ${c.line}; border-bottom: 1px solid ${c.line}; background: #fff; }
  tbody td:nth-child(3) { background: #eaeaea; }
  tbody td:last-child { border: 0; }
`;

const Splitter = styled.div`
  display: flex;
  align-items: center;
  width: 4px;
  flex: none;
  background: #fff;
`;
const Grip = styled.button<{ $right?: boolean }>`
  display: flex;
  align-items: center;
  width: 4px;
  height: 100px;
  background: #5f6b78;
  &::before {
    content: "";
    border: 3px solid transparent;
    ${(p) => (p.$right ? "border-left-color: #c3c9cf; border-right: 0;" : "border-right-color: #c3c9cf; border-left: 0;")}
  }
`;
const Canvas = styled.section`
  display: flex;
  flex: 1;
  min-width: 0;
  justify-content: space-between;
  background: #000;
`;
const AxisMark = styled.svg`
  align-self: flex-end;
  display: block;
  width: 110px;
  height: 100px;
  font-family: "Liberation Sans", sans-serif;
  font-size: 16px;
`;
const ViewTools = styled.div`
  display: flex;
  flex-direction: column;
  align-items: center;
  align-self: flex-start;
  gap: 6px;
  width: 32px;
  padding: 11px 0 20px;
  background: #4a4a4a;
  border-radius: 0 0 3px 3px;
  button { display: flex; flex-direction: column; align-items: center; gap: 5px; }
  hr { width: 22px; height: 1px; margin: 0; border: 0; background: #252b33; }
`;

/* ---------- display settings ---------- */
const Side = styled.aside`
  display: flex;
  flex-direction: column;
  width: 267px;
  flex: none;
  background: ${c.panel};
  border: 1px solid ${c.line};
`;
const SideTitle = styled.h2`
  flex: none;
  margin: 0;
  height: 22px;
  padding-left: 8px;
  font-size: 12px;
  font-weight: 400;
  line-height: 21px;
  color: #666;
  border-bottom: 1px solid ${c.line};
`;
const SideTabs = styled.div`
  display: flex;
  flex: none;
  align-items: flex-end;
  gap: 2px;
  height: 30px;
  padding-left: 2px;
  border-bottom: 1px solid ${c.line};
`;
const SideTab = styled.button<{ $on?: boolean }>`
  height: ${(p) => (p.$on ? 26 : 23)}px;
  margin-bottom: ${(p) => (p.$on ? -1 : 0)}px;
  padding: 0 6px;
  border: 1px solid ${(p) => (p.$on ? c.line : "#dedede")};
  border-bottom: 0;
  border-radius: 3px 3px 0 0;
  color: ${(p) => (p.$on ? "#3d8bea" : "#555")};
  background: ${(p) => (p.$on ? "#fff" : "#dedede")};
`;
const TreeBox = styled.div`
  display: flex;
  flex: 1;
  min-height: 0;
  margin: 2px 2px 0;
  border: 1px solid ${c.line};
  background: #fff;
  overflow: hidden;
`;
const TreeTable = styled.table`
  flex: 1;
  align-self: flex-start;
  table-layout: fixed;
  border-spacing: 0;
  th, td { height: 21px; padding: 0; font-weight: 400; border-right: 1px solid ${c.line}; border-bottom: 1px solid ${c.line}; }
  thead th { color: #444; background: ${c.panel}; text-align: center; }
  td { text-align: center; }
`;
const guide = "linear-gradient(#c3c5cb, #c3c5cb)";
const TreeCell = styled.th<{ $lv: number; $last: boolean }>`
  background-repeat: no-repeat;
  ${(p) =>
    p.$lv === 0 &&
    css`background-image: ${guide}; background-position: 8px 10px; background-size: 1px 11px;`}
  ${(p) =>
    p.$lv === 1 &&
    css`background-image: ${guide}, ${guide}, ${guide};
      background-position: 8px 0, 8px 10px, 18px 10px;
      background-size: 1px 21px, 4px 1px, 1px 11px;`}
  ${(p) =>
    p.$lv === 2 &&
    css`background-image: ${guide}, ${guide}, ${guide};
      background-position: 8px 0, 18px 0, 18px 10px;
      background-size: 1px 21px, 1px ${p.$last ? 11 : 21}px, 18px 1px;`}
  > span {
    display: flex;
    align-items: center;
    gap: 6px;
    height: 20px;
    padding-left: ${(p) => [1, 11, 41][p.$lv]}px;
  }
`;
const Fold = styled.button`
  display: grid;
  place-items: center;
  width: 14px;
  height: 14px;
  border: 1px solid #9a9a9a;
  border-radius: 2px;
  background: #f1f1f1;
  &::before { content: ""; width: 7px; height: 1px; background: #000; }
`;
const Check = styled.input<{ $some?: boolean }>`
  appearance: none;
  display: inline-grid;
  place-items: center;
  vertical-align: middle;
  width: 14px;
  height: 14px;
  margin: 0;
  border: 1px solid #8c8c8c;
  border-radius: 2px;
  background: #fff;
  &:disabled { border-color: #b4b4b4; background: #efefef; }
  &:checked { border-color: #4c9ffb; background: #4c9ffb; }
  &:checked::after {
    content: "";
    width: 8px;
    height: 5px;
    margin-bottom: 2px;
    border: solid #fff;
    border-width: 0 0 2px 2px;
    rotate: -45deg;
  }
  ${(p) =>
    p.$some &&
    css`&::after { content: ""; width: 10px; height: 10px; border: 1px solid #4a97f0; border-radius: 1px; background: #9dc9fd; }`}
`;
const Scroll = styled.div`
  display: flex;
  flex-direction: column;
  align-items: center;
  width: 15px;
  padding: 3px 0;
  &::before, &::after { content: ""; border: 4px solid transparent; }
  &::before { border-top: 0; border-bottom-color: #333; }
  &::after { border-bottom: 0; border-top-color: #333; margin-top: auto; }
`;
const Thumb = styled.div`
  width: 8px;
  height: 33%;
  margin-top: 2px;
  border-radius: 4px;
  background: #c8c8c8;
`;
const SideFoot = styled.div`
  display: flex;
  flex: none;
  justify-content: flex-end;
  padding: 6px 7px;
  button {
    height: 26px;
    padding: 0 8px;
    border: 1px solid #b9c3d6;
    border-radius: 3px;
    background: #fafafa;
    color: #222;
  }
`;

/* ---------- status ---------- */
const Status = styled.footer`
  display: flex;
  flex: none;
  align-items: center;
  gap: 3px;
  height: 29px;
  padding: 2px 29px 0 2px;
  color: #333;
  background: #dededf;
`;
const Fields = styled.div`
  display: grid;
  grid-template-columns: 203px 83px 133px 103px 77px;
`;
const Field = styled.span`
  display: flex;
  gap: 4px;
`;
const Mode = styled.button<{ $look?: "on" | "off"; $text?: boolean }>`
  display: flex;
  align-items: center;
  gap: 5px;
  height: 25px;
  padding: 0 ${(p) => (p.$text ? 5 : 4)}px;
  color: #333;
  border: 1px solid ${(p) => (p.$look === "on" ? "#3390f0" : p.$look === "off" ? "#b5b5b8" : "#98989b")};
  background: ${(p) => (p.$look === "on" ? "#fff" : "#d0d0d2")};
`;
const Taskbar = styled.div`
  display: flex;
  flex: none;
  height: 9px;
  justify-content: space-between;
  overflow: hidden;
  padding: 0 4px 0 581px;
  background: #0b1118;
  border-top: 1px solid #fff;
  time { padding: 3px 0 0; margin-right: 62px; color: #fff; }
  div { display: flex; border-right: 1px solid #777; }
`;
const TaskActive = styled.span`
  width: 160px;
  background: #3f4347;
`;

/* ---------- data ---------- */
const navFolders = ["轴线", "柱", "墙", "门窗洞", "梁", "板", "楼梯", "装修", "土方", "基础", "其它", "自定义"];

const groups: [string, string[]][] = [
  ["轴线", ["轴网", "辅助轴线"]],
  ["柱", ["柱", "构造柱", "砌体柱"]],
  ["墙", ["剪力墙", "人防门框墙", "砌体墙", "砌体加筋", "保温墙", "暗梁", "墙垛", "幕墙"]],
  ["门窗洞", ["门", "窗", "门联窗", "墙洞", "带形窗", "带形洞", "飘窗", "老虎窗", "过梁", "壁龛"]],
  ["梁", ["梁", "连梁", "圈梁"]],
  ["板", ["现浇板", ""]],
];
type Row = { name: string; lv: number; last: boolean; on: boolean };
const rows: Row[] = [{ name: "所有构件", lv: 0, last: false, on: false }];
groups.forEach(([name, kids], gi) => {
  rows.push({ name, lv: 1, last: false, on: gi === 0 });
  kids.forEach((k, i) => k && rows.push({ name: k, lv: 2, last: i === kids.length - 1, on: gi === 0 }));
});

const TreeRow = ({ row }: { row: Row }) => {
  const [on, setOn] = useState(row.on);
  const [named, setNamed] = useState(false);
  return (
    <tr>
      <TreeCell scope="row" $lv={row.lv} $last={row.last}>
        <span>
          {row.lv < 2 && <Fold aria-label={`折叠${row.name}`} />}
          {row.name}
        </span>
      </TreeCell>
      <td><Check type="checkbox" aria-label={`显示图元 ${row.name}`} $some={row.lv === 0} checked={on} onChange={() => setOn(!on)} /></td>
      <td><Check type="checkbox" aria-label={`显示名称 ${row.name}`} disabled={row.on} checked={named} onChange={() => setNamed(!named)} /></td>
    </tr>
  );
};

const Cube = ({ front, label }: { front?: boolean; label?: string }) => (
  <Svg $s={24} viewBox="0 0 24 24" aria-hidden="true">
    <path d="M.5 7L7 1.500H23.500V17L18 22.500H.5Z" fill={front ? "#71808f" : "#4c5763"} stroke="#1f262e" />
    <path d="M.5 7H18V22.500M18 7L23.500 1.500" fill="none" stroke="#1f262e" />
    {front && <path d="M7 2V17H23M7 17L1 22" fill="none" stroke="#2a323b" />}
    {label && <text x="6" y="20" fontSize="8" fontFamily="Liberation Sans, sans-serif" fill="#14191f">{label}</text>}
  </Svg>
);

export default function App() {
  const [query, setQuery] = useState("");
  return (
    <Shell>
      <Global />
      <Header>
        <TopDrawer />
        <LogoButton aria-label="应用菜单">
          <Svg $s={32} viewBox="0 0 32 32" aria-hidden="true">
            <defs>
              <linearGradient id="logo" x1="0" y1="0" x2="0" y2="1">
                <stop offset="0" stopColor="#19b8f3" /><stop offset="1" stopColor="#0c62e6" />
              </linearGradient>
              <linearGradient id="logoT" x1="0" y1="0" x2="0" y2="1">
                <stop offset="0" stopColor="#fff" /><stop offset="1" stopColor="#a9d8fb" />
              </linearGradient>
            </defs>
            <rect x="2" y="1" width="28" height="28" rx="7" fill="url(#logo)" />
            <path d="M7 8Q9 5.500 12 6.300Q17 8 24 5.500V11Q21.500 11.500 19 11.500V20L21.500 24.500H12.500L13.500 20V11.500Q10 10.500 7 13.500Z" fill="url(#logoT)" />
            <path d="M32 27V32H27Z" fill="#777" />
          </Svg>
        </LogoButton>
        <TitleRow>
          <Quick>
            <button aria-label="保存"><Icon n="save" /></button>
            <button aria-label="新建工程"><Icon n="doc" /></button>
            <button aria-label="打开"><Icon n="open" /></button>
            <button aria-label="撤销"><Icon n="undo" /><Tri $c="#aaa" /></button>
            <button aria-label="恢复"><Icon n="redo" /><Tri $c="#aaa" /></button>
            <button aria-label="汇总计算"><Icon n="sum" /></button>
            {["qa1", "qa2", "qa3", "qa4", "qa5", "qa6"].map((n) => (
              <button key={n} aria-label={n}><Icon n={n} /></button>
            ))}
            <button aria-label="自定义快速访问">
              <Svg $s={8} viewBox="0 0 8 8" aria-hidden="true"><path d="M1 .5H6" stroke="#555" /><path d="M.5 4H6.500L3.500 7Z" fill="#555" /></Svg>
            </button>
          </Quick>
          <Title>广联达BIM土建计量平台 GTJ2018</Title>
          <WindowButtons>
            <button aria-label="最小化"><Icon n="min" /></button>
            <button aria-label="还原"><Icon n="max" /></button>
            <button aria-label="关闭"><Icon n="close" /></button>
          </WindowButtons>
        </TitleRow>
        <TabRow>
          <Tabs>
            {["开始", "工程设置", "建模", "视图", "工具", "工程量", "云应用"].map((t) => (
              <RibbonTab key={t} $on={t === "建模"}>{t}</RibbonTab>
            ))}
          </Tabs>
          <Tools>
            <SearchBox>
              <input aria-label="搜索帮助" placeholder="钢筋弯曲值调整可以精确到何种程度?" />
              <Icon n="search" />
            </SearchBox>
            <UserButton><Icon n="user" />力工</UserButton>
            <button aria-label="通知"><Icon n="bell" /></button>
            <button aria-label="消息"><Icon n="chat" /></button>
            <button aria-label="帮助"><Help>?</Help><Tri $c="#999" /></button>
            <button aria-label="皮肤"><Icon n="shirt" /></button>
            <button aria-label="收起功能区"><Icon n="up" /></button>
          </Tools>
        </TabRow>
      </Header>

      <Ribbon>
        <Group>
          <GroupBody $l={8} $r={13}>
            <Big $on><Icon n="select" s={30} />选择</Big>
            <ToolCol items={[["pick", "拾取构件"], ["batch", "批量选择"], ["prop", "按属性选择"]]} />
          </GroupBody>
          <GroupLabel>选择<Tri $big /></GroupLabel>
        </Group>
        <Group>
          <GroupBody $gap={9} $r={15}>
            <ToolCol items={[["find", "查找替换", "x"], ["scale", "设置比例", "x"], ["restore", "还原CAD", "x"]]} />
            <ToolCol items={[["floor", "识别楼层表", "x"], ["cad", "CAD识别选项"]]} />
          </GroupBody>
          <GroupLabel>CAD操作<Tri $big /></GroupLabel>
        </Group>
        <Group>
          <GroupBody $gap={4}>
            <ToolCol items={[["define", "定义"], ["cloud", "云检查"], ["lock", "锁定", "v"]]} />
            <Col>
              <ToolButton t={["copyFloor", "复制到其它层", "v"]} />
              <ToolButton t={["slab", "自动平齐板", "xv"]} />
              <MenuAnchor>
                <Small $on aria-haspopup="menu" aria-expanded="true">
                  <Icon n="aux1" />两点辅轴<Arrow $on><Tri /></Arrow>
                </Small>
                <Menu>
                  {auxItems.map(([n, label]) => (
                    <li key={n}><MenuItem><Icon n={n} />{label}</MenuItem></li>
                  ))}
                </Menu>
              </MenuAnchor>
            </Col>
            <ToolCol items={[["length", "长度标注", "v"], ["store", "图元存盘", "v"], ["filter", "图元过滤", "x"]]} />
          </GroupBody>
        </Group>
        <Group>
          <GroupBody $gap={8}>
            <ToolCol items={[["copy", "复制"], ["move", "移动"], ["mirror", "镜像"]]} />
            <ToolCol items={[["extend", "延伸"], ["trim", "修剪", "x"], ["offset", "偏移", "x"]]} />
            <ToolCol items={[["brk", "打断", "x"], ["merge", "合并", "x"], ["split", "分割", "x"]]} />
            <ToolCol items={[["align", "对齐", "v"], ["erase", "删除"], ["rotate", "旋转"]]} />
          </GroupBody>
          <GroupLabel>修改<Tri $big /></GroupLabel>
        </Group>
        <Group>
          <GroupBody $r={9}>
            <Big disabled><Icon n="point" s={30} />点</Big>
            <Big disabled><Icon n="lineBig" s={30} />直线</Big>
            <ToolCol items={[["arc", "", "x"], ["circle", "", "x"], ["rect", "", "x"]]} />
          </GroupBody>
          <GroupLabel>绘图<Tri $big /></GroupLabel>
        </Group>
        <Group>
          <GroupBody $l={7} $r={16}>
            <Big disabled><Icon n="gridBig" s={30} />识别轴网</Big>
          </GroupBody>
          <GroupLabel>识别轴网</GroupLabel>
        </Group>
        <Group>
          <GroupBody $gap={9}>
            <ToolCol items={[["axDist", "修改轴距"], ["axNo", "修改轴号"], ["axPos", "修改轴号位置"]]} />
            <ToolCol items={[["cutAx", "修剪轴线"], ["cutBox", "拉框修剪", "v"], ["resAx", "恢复轴线"]]} />
          </GroupBody>
          <GroupLabel>轴网二次编辑</GroupLabel>
        </Group>
      </Ribbon>

      <Band>
        {[["楼层", "首层"], ["构件分类", "常用构件类型"], ["构件类型", "轴网"], ["构件", ""]].map(([label, value]) => (
          <Combo key={label}>
            <select aria-label={label} defaultValue={value}><option>{value}</option></select>
            <Tri />
          </Combo>
        ))}
      </Band>

      <Work>
        <Nav>
          <NavTools>
            <Icon n="plus2" />
            <Spacer />
            <ViewButton aria-label="列表视图"><Icon n="list" /></ViewButton>
            <ViewButton aria-label="卡片视图"><Icon n="card" /></ViewButton>
          </NavTools>
          <NavList>
            <li><NavItem><Icon n="folderOpen" />常用构件类型</NavItem></li>
            <li><NavItem $child><Icon n="axis" />轴网(J)</NavItem></li>
            {navFolders.map((f) => (
              <li key={f}><NavItem><Icon n="folder" />{f}</NavItem></li>
            ))}
          </NavList>
        </Nav>

        <DockColumn>
          <Dock $grow={38}>
            <Strip />
            <DockTabs><DockTab $on>构件列表</DockTab><DockTab>图纸管理</DockTab></DockTabs>
            <DockTools>
              <button><Icon n="create" />新建<Tri /></button>
              <button disabled><Icon n="del" />删除</button>
              <button disabled><Icon n="dup" />复制</button>
              <button><Icon n="layers" />层间复制</button>
            </DockTools>
            <DockSearch aria-label="搜索构件" placeholder="搜索构件..." value={query} onChange={(e) => setQuery(e.target.value)} />
            <Entry>轴网</Entry>
          </Dock>
          <Dock $grow={62}>
            <Strip><button aria-label="关闭属性"><Icon n="closeSmall" s={10} /></button></Strip>
            <DockTabs><DockTab $on>属性列表</DockTab><DockTab>图层管理</DockTab></DockTabs>
            <PropArea>
              <PropTable>
                <colgroup><col width="22" /><col width="101" /><col width="139" /><col /></colgroup>
                <thead><tr><th /><th>属性名称</th><th>属性值</th><th /></tr></thead>
                <tbody><tr><th scope="row">1</th><td /><td /><td /></tr></tbody>
              </PropTable>
            </PropArea>
          </Dock>
        </DockColumn>
        <Splitter><Grip aria-label="收起左侧面板" /></Splitter>

        <Canvas>
          <AxisMark viewBox="0 0 110 100">
            <path d="M50 50V32" stroke="#0f0" strokeWidth="3" />
            <path d="M50 21L54.500 32H45.500Z" fill="#0f0" />
            <path d="M50 50H69" stroke="#f00" strokeWidth="4" />
            <path d="M80 50L69 45V55Z" fill="#f00" />
            <circle cx="50" cy="50" r="5.500" fill="#0000c4" />
            <text x="50" y="20" textAnchor="middle" fill="#0f0">Y</text>
            <text x="86" y="56" textAnchor="middle" fill="#f00">X</text>
          </AxisMark>
          <ViewTools>
            <button aria-label="动态观察">
              <Svg $s={26} viewBox="0 0 26 26" aria-hidden="true">
                <defs><radialGradient id="ball" cx=".4" cy=".3"><stop offset="0" stopColor="#8794a3" /><stop offset="1" stopColor="#353f4a" /></radialGradient></defs>
                <circle cx="13" cy="13" r="9.500" fill="url(#ball)" stroke="#20262d" />
                <path d="M3 20Q9 20 20 9" fill="none" stroke="#20262d" strokeWidth="1.500" />
                <circle cx="20.500" cy="8.500" r="4" fill="url(#ball)" stroke="#20262d" /><circle cx="3" cy="19" r="2" fill="#5a6673" stroke="#20262d" />
              </Svg>
            </button>
            <button aria-label="三维"><Cube label="3D" /></button>
            <button aria-label="视图方向"><Cube front /><Tri $c="#1d232a" /></button>
            <button aria-label="显示方式"><Cube /><Tri $c="#1d232a" /></button>
            <button aria-label="旋转视图">
              <Svg $s={24} viewBox="0 0 24 24" aria-hidden="true">
                <path d="M20 6A10 10 0 1 0 21 16" fill="none" stroke="#262d35" strokeWidth="2.200" /><path d="M22 1V8.500H14.500" fill="none" stroke="#262d35" strokeWidth="2.200" />
              </Svg>
              <Tri $c="#1d232a" />
            </button>
            <hr />
            <button aria-label="显示设置">
              <Svg $s={24} viewBox="0 0 24 24" aria-hidden="true">
                <path d="M.5 4.500L3 1.500H21L23.500 4.500V23.500H.5Z" fill="#4c5763" stroke="#1f262e" /><path d="M.5 4.500H23.500M12 9V22" stroke="#1f262e" />
                <path d="M3.500 9.500H6.500V12.500H3.500ZM3.500 14.500H6.500V17.500H3.500ZM3.500 19.500H6.500V22H3.500ZM14.500 9.500H17.500V12.500H14.500ZM14.500 14.500H17.500V17.500H14.500ZM14.500 19.500H17.500V22H14.500ZM8 11.500H10.500M8 16.500H10.500M8 21H10.500M19 11.500H21.500M19 16.500H21.500M19 21H21.500M4 6L5.500 8L8 5M15 6L16.500 8L19 5" fill="none" stroke="#14191f" />
              </Svg>
            </button>
          </ViewTools>
        </Canvas>

        <Splitter><Grip $right aria-label="收起右侧面板" /></Splitter>
        <Side>
          <Strip><button aria-label="关闭显示设置"><Icon n="closeSmall" s={10} /></button></Strip>
          <SideTitle>显示设置</SideTitle>
          <SideTabs><SideTab $on>图元显示</SideTab><SideTab>楼层显示</SideTab></SideTabs>
          <TreeBox>
            <TreeTable>
              <colgroup><col /><col width="63" /><col width="63" /></colgroup>
              <thead><tr><th>图层构件</th><th>显示图元</th><th>显示名称</th></tr></thead>
              <tbody>{rows.map((r, i) => <TreeRow key={i} row={r} />)}</tbody>
            </TreeTable>
            <Scroll><Thumb /></Scroll>
          </TreeBox>
          <SideFoot><button>恢复默认设置</button></SideFoot>
        </Side>
      </Work>

      <Status>
        <Fields>
          <Field>X = -1432 Y = 914</Field>
          <Field><span>层高：</span><span>3</span></Field>
          <Field>标高: -0.05~2.95</Field>
          <Field>0</Field>
          <Field><span>隐藏：</span><span>0</span></Field>
        </Fields>
        <Mode aria-label="正交"><Icon n="corner" s={15} /></Mode>
        <Mode aria-label="框选" $look="on"><Icon n="boxSel" s={15} /><Tri /></Mode>
        <Mode aria-label="交点" $look="off"><Icon n="cross" s={15} /></Mode>
        <Mode aria-label="角度"><Icon n="angle" s={15} /><Tri /></Mode>
        <Mode aria-label="动态输入"><Icon n="plusBox" s={15} /><Tri /></Mode>
        <Mode $text>跨图层选择</Mode>
        <Mode $text>折线选择</Mode>
        <span>按鼠标左键指定第一个角点，或拾取构件图元</span>
        <Spacer />
        <span>1000 FPS</span>
      </Status>
      <Taskbar><TaskActive /><div><time>11:24:46</time></div></Taskbar>
    </Shell>
  );
}
